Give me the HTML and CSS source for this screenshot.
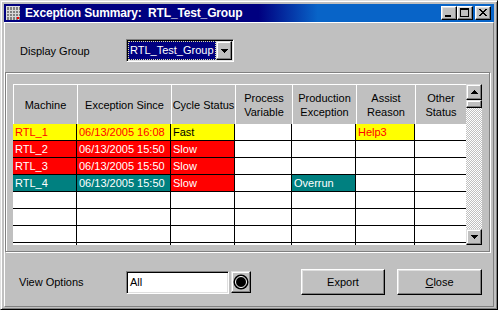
FILE: index.html
```html
<!DOCTYPE html>
<html lang="en">
<head>
    <meta charset="UTF-8">
    <title>Exception Summary</title>
    <link rel="stylesheet" href="styles.css">
</head>
<body>
    <div class="window">
        <div class="titlebar">
            <svg class="app-icon" width="16" height="16" viewBox="0 0 16 16" shape-rendering="crispEdges">
                <rect x="1" y="1" width="14" height="14" fill="#808080"/>
                <rect x="1" y="1" width="14" height="1" fill="#dfdfdf"/>
                <rect x="1" y="1" width="1" height="14" fill="#dfdfdf"/>
                <path d="M4 2v13M7 2v13M10 2v13M13 2v13M2 5h13M2 8h13M2 11h13" stroke="#d8d8d8" stroke-width="1"/>
                <rect x="12" y="12" width="2" height="2" fill="#ff0000"/>
            </svg>
            <span class="title">Exception Summary:  RTL_Test_Group</span>
            <div class="controls">
                <span class="ctl">
                    <svg width="14" height="12" viewBox="0 0 14 12" shape-rendering="crispEdges"><rect x="3" y="8" width="6" height="2" fill="#000"/></svg>
                </span>
                <span class="ctl">
                    <svg width="14" height="12" viewBox="0 0 14 12" shape-rendering="crispEdges"><rect x="2.5" y="1.5" width="8" height="8" fill="none" stroke="#000"/><rect x="2" y="1" width="9" height="2" fill="#000"/></svg>
                </span>
                <span class="ctl close-ctl">
                    <svg width="14" height="12" viewBox="0 0 14 12" shape-rendering="crispEdges">
                        <path d="M3 2h2v1h1v1h2v-1h1v-1h2v1h-1v1h-1v1h-1v1h1v1h1v1h1v1h-2v-1h-1v-1h-2v1h-1v1h-2v-1h1v-1h1v-1h1v-1h-1v-1h-1v-1h-1z" fill="#000"/>
                    </svg>
                </span>
            </div>
        </div>

        <div class="client">
            <div class="row top-row">
                <span class="lbl">Display Group</span>
                <div class="combo sunken">
                    <span class="combo-value"><span class="sel">RTL_Test_Group</span></span>
                    <span class="combo-btn raised">
                        <svg width="7" height="4" viewBox="0 0 7 4" shape-rendering="crispEdges"><path d="M0 0h7v1h-1v1h-1v1h-1v1h-1v-1h-1v-1h-1v-1h-1z" fill="#000"/></svg>
                    </span>
                </div>
            </div>

            <div class="panel">
                <div class="grid-wrap">
                    <div class="grid">
                        <div class="hd">Machine</div>
                        <div class="hd">Exception Since</div>
                        <div class="hd">Cycle Status</div>
                        <div class="hd">Process Variable</div>
                        <div class="hd">Production Exception</div>
                        <div class="hd">Assist Reason</div>
                        <div class="hd">Other Status</div>

                        <div class="cell y">RTL_1</div>
                        <div class="cell y">06/13/2005 16:08</div>
                        <div class="cell y dark">Fast</div>
                        <div class="cell"></div>
                        <div class="cell"></div>
                        <div class="cell y">Help3</div>
                        <div class="cell last"></div>

                        <div class="cell r">RTL_2</div>
                        <div class="cell r">06/13/2005 15:50</div>
                        <div class="cell r">Slow</div>
                        <div class="cell"></div>
                        <div class="cell"></div>
                        <div class="cell"></div>
                        <div class="cell last"></div>

                        <div class="cell r">RTL_3</div>
                        <div class="cell r">06/13/2005 15:50</div>
                        <div class="cell r">Slow</div>
                        <div class="cell"></div>
                        <div class="cell"></div>
                        <div class="cell"></div>
                        <div class="cell last"></div>

                        <div class="cell t">RTL_4</div>
                        <div class="cell t">06/13/2005 15:50</div>
                        <div class="cell r">Slow</div>
                        <div class="cell"></div>
                        <div class="cell t">Overrun</div>
                        <div class="cell"></div>
                        <div class="cell last"></div>

                        <div class="cell"></div><div class="cell"></div><div class="cell"></div><div class="cell"></div><div class="cell"></div><div class="cell"></div><div class="cell last"></div>
                        <div class="cell"></div><div class="cell"></div><div class="cell"></div><div class="cell"></div><div class="cell"></div><div class="cell"></div><div class="cell last"></div>
                        <div class="cell"></div><div class="cell"></div><div class="cell"></div><div class="cell"></div><div class="cell"></div><div class="cell"></div><div class="cell last"></div>
                        <div class="cell"></div><div class="cell"></div><div class="cell"></div><div class="cell"></div><div class="cell"></div><div class="cell"></div><div class="cell last"></div>
                    </div>
                    <div class="vscroll">
                        <span class="sb-btn raised">
                            <svg width="7" height="4" viewBox="0 0 7 4" shape-rendering="crispEdges"><path d="M3 0h1v1h1v1h1v1h1v1h-7v-1h1v-1h1v-1h1z" fill="#000"/></svg>
                        </span>
                        <span class="thumb raised"></span>
                        <span class="track"></span>
                        <span class="sb-btn raised">
                            <svg width="7" height="4" viewBox="0 0 7 4" shape-rendering="crispEdges"><path d="M0 0h7v1h-1v1h-1v1h-1v1h-1v-1h-1v-1h-1v-1h-1z" fill="#000"/></svg>
                        </span>
                    </div>
                </div>
            </div>

            <div class="row bottom-row">
                <span class="lbl lbl-view">View Options</span>
                <div class="field sunken">All</div>
                <span class="round-btn raised">
                    <svg width="16" height="16" viewBox="0 0 16 16">
                        <circle cx="8" cy="8" r="7.5" fill="#000"/>
                        <circle cx="8" cy="8" r="5.5" fill="#000" stroke="#fff" stroke-width="1"/>
                    </svg>
                </span>
                <button class="btn raised btn-export">Export</button>
                <button class="btn raised btn-close"><u>C</u>lose</button>
            </div>
        </div>
    </div>
</body>
</html>
```

FILE: styles.css
```css
* {
    box-sizing: border-box;
}

body {
    margin: 0;
    background-color: #c0c0c0;
    font-family: "Liberation Sans", Arial, sans-serif;
    font-size: 11px;
    color: #000;
}

.window {
    width: 498px;
    height: 310px;
    background-color: #c0c0c0;
    border: 1px solid;
    border-color: #dfdfdf #000 #000 #dfdfdf;
    box-shadow: inset 1px 1px #fff, inset -1px -1px #808080;
    padding: 3px 3px 2px 3px;
    display: flex;
    flex-direction: column;
}

/* title bar */
.titlebar {
    height: 18px;
    display: flex;
    align-items: center;
    padding: 0 3px 0 1px;
    background: linear-gradient(90deg, #000080 0%, #000080 52%, #0864c8 64%, #0864c8 100%);
    color: #fff;
}

.app-icon {
    flex: none;
}

.title {
    margin-left: 4px;
    font-size: 12px;
    font-weight: bold;
    letter-spacing: -0.15px;
    white-space: pre;
}

.controls {
    margin-left: auto;
    display: flex;
}

.ctl {
    width: 16px;
    height: 14px;
    display: flex;
    align-items: center;
    justify-content: center;
    background-color: #c0c0c0;
    border: 1px solid;
    border-color: #fff #000 #000 #fff;
    box-shadow: inset -1px -1px #808080, inset 1px 1px #dfdfdf;
}

.close-ctl {
    margin-left: 2px;
}

/* 3d helpers */
.raised {
    background-color: #c0c0c0;
    border: 1px solid;
    border-color: #dfdfdf #000 #000 #dfdfdf;
    box-shadow: inset -1px -1px #808080, inset 1px 1px #fff;
}

.sunken {
    border: 1px solid;
    border-color: #808080 #fff #fff #808080;
    box-shadow: inset 1px 1px #000, inset -1px -1px #dfdfdf;
}

/* dialog body */
.client {
    flex: 1;
    display: flex;
    flex-direction: column;
    border: 1px solid;
    border-color: #fff #808080 #808080 #fff;
}

.row {
    display: flex;
    align-items: center;
}

.top-row {
    margin-top: 16px;
    height: 23px;
}

.lbl {
    width: 106px;
    margin-left: 15px;
}

.lbl-view {
    width: 107px;
    margin-left: 14px;
}

.combo {
    width: 108px;
    height: 23px;
    padding: 1px;
    display: flex;
    background-color: #fff;
}

.combo-value {
    width: 88px;
    display: flex;
}

.sel {
    flex: 1;
    background-color: #000080;
    color: #fff;
    border: 1px dotted #e0e0a0;
    padding-left: 1px;
    line-height: 17px;
    white-space: nowrap;
}

.combo-btn {
    width: 16px;
    display: flex;
    align-items: center;
    justify-content: center;
}

/* table panel */
.panel {
    margin: 10px 3px 0 0;
    padding: 11px 0 6px 7px;
    border: 1px solid #808080;
    box-shadow: inset 1px 1px #fff, 1px 1px #fff;
}

.grid-wrap {
    display: flex;
    height: 161px;
}

.grid {
    width: 453px;
    height: 161px;
    overflow: hidden;
    display: grid;
    grid-template-columns: 64px 94px 64px 57px 64px 59px 51px;
    grid-template-rows: 40px;
    grid-auto-rows: 17px;
    background-color: #fff;
}

.hd {
    background-color: #c0c0c0;
    border-top: 1px solid #fff;
    border-left: 1px solid #fff;
    display: flex;
    align-items: center;
    justify-content: center;
    text-align: center;
    line-height: 14px;
}

.cell {
    border-right: 1px solid #000;
    border-bottom: 1px solid #000;
    padding-left: 2px;
    line-height: 16px;
    white-space: nowrap;
    overflow: hidden;
}

.cell.last {
    border-right: none;
}

.y {
    background-color: #ffff00;
    color: #ff0000;
}

.y.dark {
    color: #000;
}

.r {
    background-color: #ff0000;
    color: #fff;
}

.t {
    background-color: #008080;
    color: #fff;
}

.vscroll {
    width: 16px;
    display: flex;
    flex-direction: column;
    background: repeating-conic-gradient(#c0c0c0 0 25%, #fff 0 50%) 0 0 / 2px 2px;
}

.sb-btn {
    height: 16px;
    display: flex;
    align-items: center;
    justify-content: center;
}

.thumb {
    height: 8px;
}

.track {
    flex: 1;
}

/* bottom row */
.bottom-row {
    margin-top: 17px;
    height: 26px;
}

.field {
    width: 103px;
    height: 23px;
    background-color: #fff;
    padding-left: 3px;
    line-height: 21px;
}

.round-btn {
    width: 20px;
    height: 22px;
    margin-left: 2px;
    display: flex;
    align-items: center;
    justify-content: center;
}

.btn {
    height: 26px;
    padding: 0;
    font-family: inherit;
    font-size: 11px;
    color: #000;
    border-color: #fff #000 #000 #fff;
    box-shadow: inset -1px -1px #808080, inset 1px 1px #dfdfdf;
}

.btn-export {
    width: 84px;
    margin-left: auto;
}

.btn-close {
    width: 85px;
    margin-left: 12px;
    margin-right: 11px;
}
```
